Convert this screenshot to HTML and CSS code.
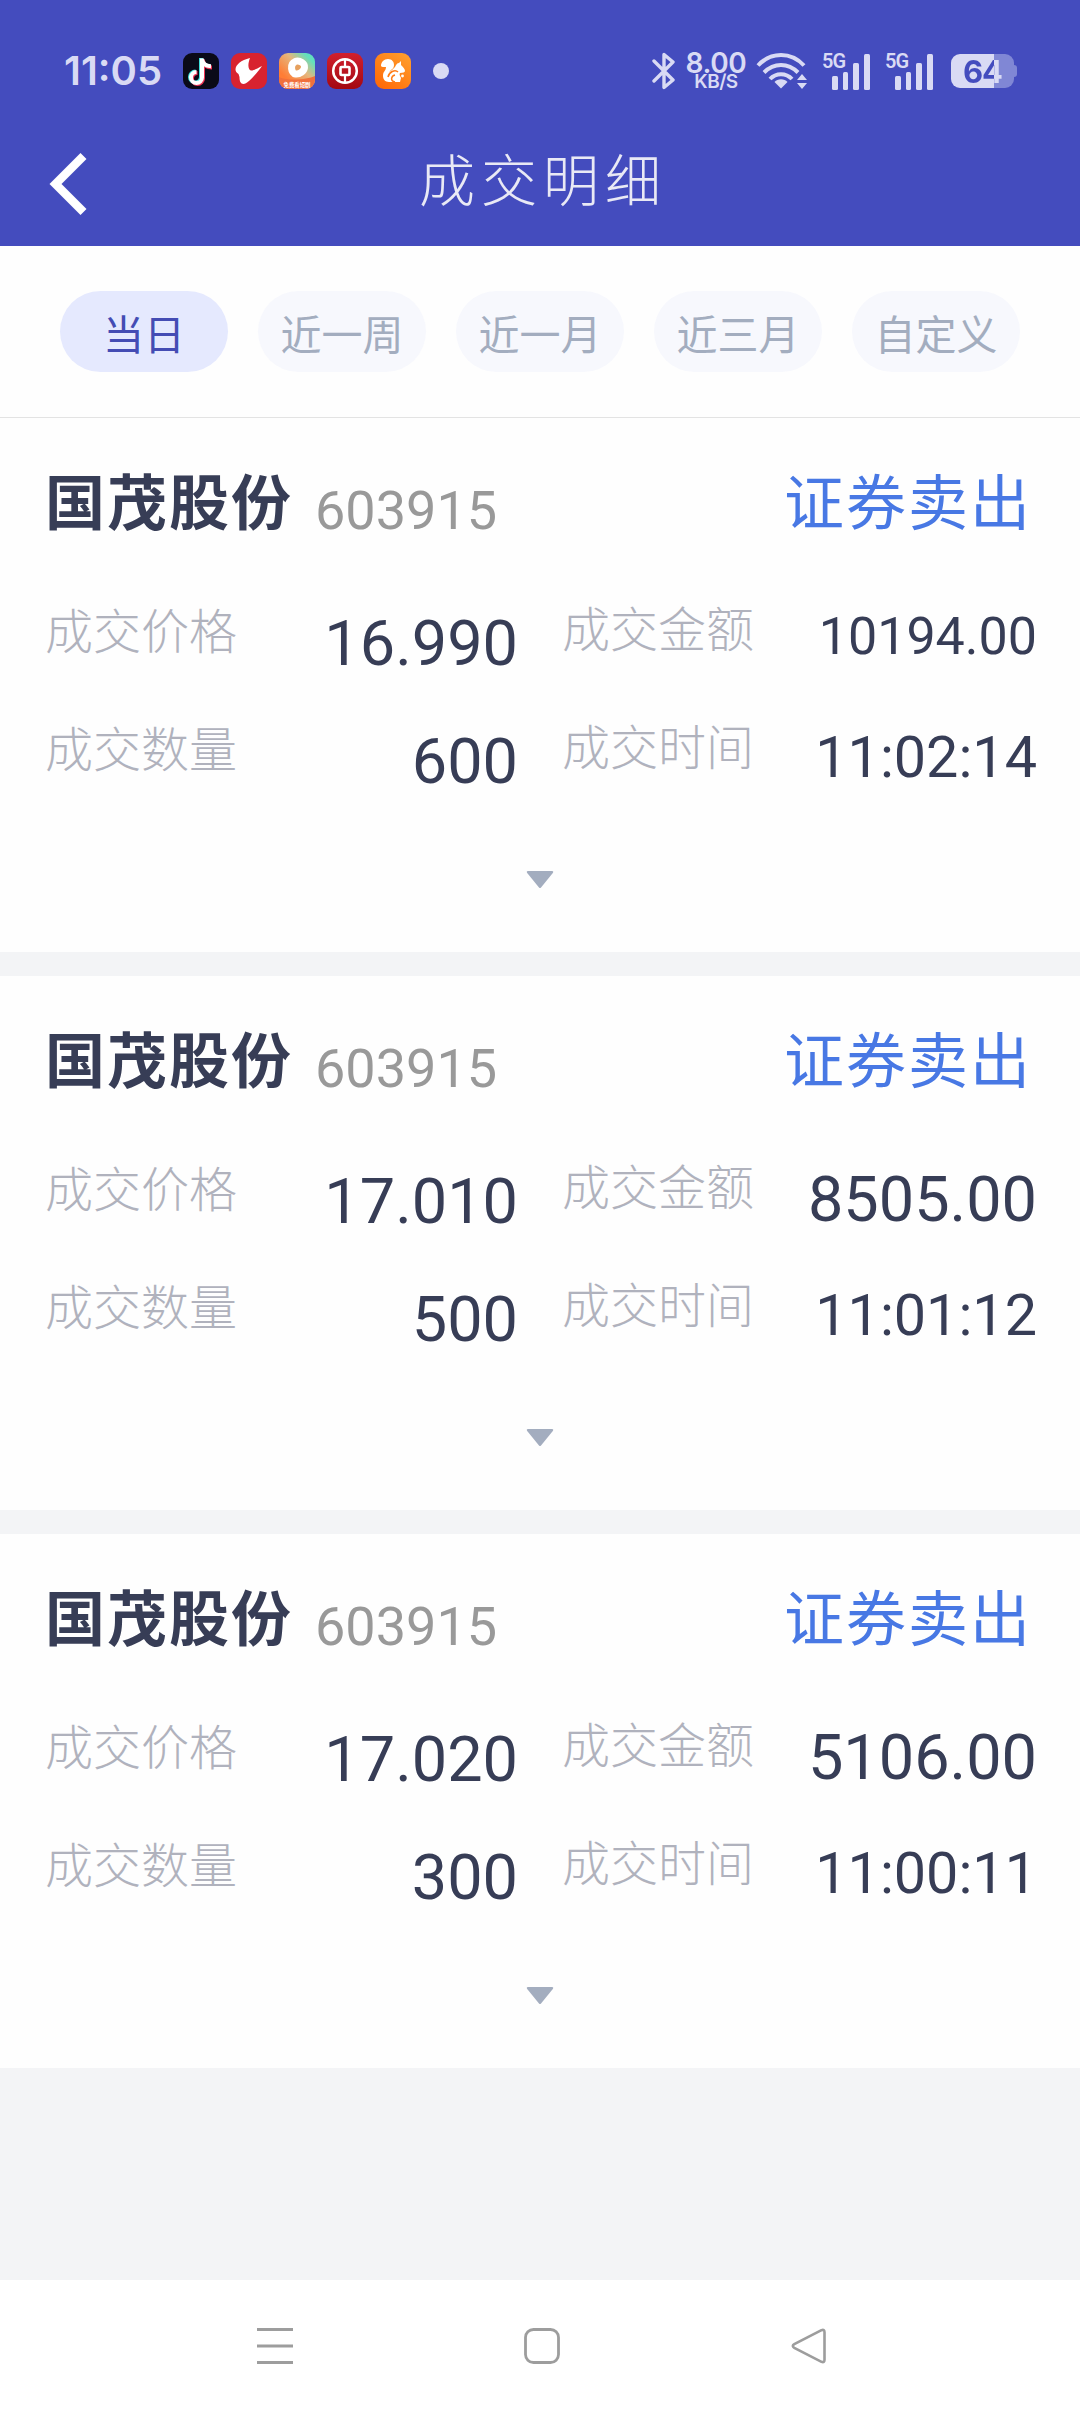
FILE: index.html
```html
<!DOCTYPE html>
<html lang="zh-CN">
<head>
<meta charset="utf-8">
<title>成交明细</title>
<link rel="stylesheet" href="styles.css">
</head>
<body>
<div class="screen">
  <header class="top">
    <div class="status">
      <span class="clock">11:05</span>
      <div class="apps">
        <svg width="36" height="36" viewBox="0 0 36 36"><rect width="36" height="36" rx="9" fill="#0a0a18"/><g fill="none" stroke-width="4"><path d="M18 5v19a5.500 5.500 0 1 1-5.500-5.500M18 7c1 4 4 6 8.500 6.500" stroke="#3fe0dc"/><path d="M20 6.500v19a5.500 5.500 0 1 1-5.500-5.500M20 8c1 4 4 6.500 9 6.500" stroke="#ee3355"/><path d="M19 5.500v19a5.500 5.500 0 1 1-5.500-5.500M19 6c.5 4.500 4 7 9 7.200" stroke="#fff"/></g></svg>
        <svg width="36" height="36" viewBox="0 0 36 36"><rect width="36" height="36" rx="9" fill="#d8232f"/><path d="M19 5C10 7 4.500 12 4.500 16.500c0 2 1 3 3 4.500l1 3c0 4 1 7 4 7 4 0 12-9 18.500-18-6 3-9 5-11 4.500-3-1-3.500-6-1-12.500Z" fill="#fff"/></svg>
        <svg width="36" height="36" viewBox="0 0 36 36"><defs><linearGradient id="video" x1="0" y1="1" x2="1" y2="0"><stop offset=".25" stop-color="#ff7d35"/><stop offset=".6" stop-color="#e5b67d"/><stop offset=".85" stop-color="#62dfbd"/></linearGradient></defs><rect width="36" height="36" rx="9" fill="url(#video)"/><path d="M0 24c8 4 28 3 36-1v4a9 9 0 0 1-9 9H9a9 9 0 0 1-9-9Z" fill="#f0703c"/><path d="M16 8.500c5-1.500 10 2 9.500 6s-5 7-9 6.500-6.500-10 .0-12.500Z" fill="#e6a05e" stroke="#fff" stroke-width="7" stroke-linejoin="round"/><text x="18" y="33.500" class="app-caption">免费看短剧</text></svg>
        <svg width="36" height="36" viewBox="0 0 36 36"><defs><linearGradient id="bank" x2="0" y2="1"><stop stop-color="#d1202e"/><stop offset="1" stop-color="#a30812"/></linearGradient></defs><rect width="36" height="36" rx="9" fill="url(#bank)"/><g fill="none" stroke="#fff"><circle cx="18" cy="18" r="11.800" stroke-width="2.500"/><rect x="13.500" y="14" width="9" height="8" rx="1" stroke-width="2.600"/><path d="M18 6v8M18 22v8" stroke-width="2.200"/></g></svg>
        <svg width="36" height="36" viewBox="0 0 36 36"><defs><linearGradient id="uc" x1="1" x2=".2" y2="1"><stop stop-color="#ffa12f"/><stop offset="1" stop-color="#ff6a08"/></linearGradient></defs><rect width="36" height="36" rx="9" fill="url(#uc)"/><path d="M6 13c0-4 3-7 7-7s6 3 6 6c0 2-1 4-3 5l-2 2c2-1 4-3 6-5 1-2 2-4 4-4l2-2v4c2 2 4 4 4 6 0 1-2 2-5 2-1 1 0 3 1 5l-1 4H14c-4 0-6-3-6-6 0-5 3-5 3-9-2 0-5 0-5-1Z" fill="#fff"/><path d="M13 24c1-5 7-8 10-5M20 29c-5-1-4-6 0-7" fill="none" stroke="#ff7b15" stroke-width="1.500"/><circle cx="27.500" cy="23" r="1.400" fill="#fff"/></svg>
      </div>
      <i class="dot"></i>
      <div class="indicators">
        <svg class="bluetooth" width="24" height="38" viewBox="0 0 24 38"><path d="M2 9 21 28 12 35.500V2.500L21 10 2 29" fill="none" stroke="#d9daf4" stroke-width="3.400" stroke-linejoin="round" stroke-linecap="round"/></svg>
        <div class="speed"><b>8.00</b><span>KB/S</span></div>
        <svg class="wifi" width="52" height="38" viewBox="0 0 52 38"><g fill="none" stroke="#d9daf4" stroke-width="4"><path d="M2 13.500C15-.5 35-.5 48 13.500"/><path d="M8 20.500c10-10 24-10 34 0"/><path d="M14 27c6-6.500 16-6.500 22 0"/></g><path d="M25 36.500 18.500 30c3-3.600 10-3.600 13 0Z" fill="#d9daf4"/><path d="m46 22 5 6H41ZM46 37l5-6H41Z" fill="#d9daf4"/></svg>
        <div class="signal"><b>5G</b><i class="bar b1"></i><i class="bar b2"></i><i class="bar b3"></i><i class="bar b4"></i></div>
        <div class="signal"><b>5G</b><i class="bar b1"></i><i class="bar b2"></i><i class="bar b3"></i><i class="bar b4"></i></div>
        <div class="battery"><div class="cell"><span>64</span></div><i class="cap"></i></div>
      </div>
    </div>
    <div class="titlebar">
      <svg class="back" width="38" height="64" viewBox="0 0 38 64"><path d="M31.500 1 37.500 7 12.500 32l25 25-6 6L.5 32Z" fill="#fff"/></svg>
      <h1>成交明细</h1>
    </div>
  </header>
  <nav class="tabs">
    <button class="tab active">当日</button>
    <button class="tab">近一周</button>
    <button class="tab">近一月</button>
    <button class="tab">近三月</button>
    <button class="tab">自定义</button>
  </nav>
  <main class="list">
    <section class="card">
      <div class="head"><h2>国茂股份</h2><span class="code">603915</span><span class="side">证券卖出</span></div>
      <div class="details">
        <div class="item"><span class="label">成交价格</span><span class="value">16.990</span></div>
        <div class="item right"><span class="label">成交金额</span><span class="value small">10194.00</span></div>
        <div class="item"><span class="label">成交数量</span><span class="value">600</span></div>
        <div class="item right"><span class="label">成交时间</span><span class="value time">11:02:14</span></div>
      </div>
      <svg class="more" width="28" height="18" viewBox="0 0 28 18"><path d="M2 0h24q2 0 .8 2L15 16.500q-1 1-2 0L1.200 2Q0 0 2 0Z" fill="#a3adbf"/></svg>
    </section>
    <section class="card">
      <div class="head"><h2>国茂股份</h2><span class="code">603915</span><span class="side">证券卖出</span></div>
      <div class="details">
        <div class="item"><span class="label">成交价格</span><span class="value">17.010</span></div>
        <div class="item right"><span class="label">成交金额</span><span class="value">8505.00</span></div>
        <div class="item"><span class="label">成交数量</span><span class="value">500</span></div>
        <div class="item right"><span class="label">成交时间</span><span class="value time">11:01:12</span></div>
      </div>
      <svg class="more" width="28" height="18" viewBox="0 0 28 18"><path d="M2 0h24q2 0 .8 2L15 16.500q-1 1-2 0L1.200 2Q0 0 2 0Z" fill="#a3adbf"/></svg>
    </section>
    <section class="card">
      <div class="head"><h2>国茂股份</h2><span class="code">603915</span><span class="side">证券卖出</span></div>
      <div class="details">
        <div class="item"><span class="label">成交价格</span><span class="value">17.020</span></div>
        <div class="item right"><span class="label">成交金额</span><span class="value">5106.00</span></div>
        <div class="item"><span class="label">成交数量</span><span class="value">300</span></div>
        <div class="item right"><span class="label">成交时间</span><span class="value time">11:00:11</span></div>
      </div>
      <svg class="more" width="28" height="18" viewBox="0 0 28 18"><path d="M2 0h24q2 0 .8 2L15 16.500q-1 1-2 0L1.200 2Q0 0 2 0Z" fill="#a3adbf"/></svg>
    </section>
  </main>
  <footer class="navbar">
    <svg width="36" height="36" viewBox="0 0 36 36"><path d="M0 1.600h36M0 18h36M0 34.400h36" stroke="#9d9d9d" stroke-width="3"/></svg>
    <svg width="36" height="36" viewBox="0 0 36 36"><rect x="1.500" y="1.500" width="33" height="33" rx="8" fill="none" stroke="#9d9d9d" stroke-width="2.800"/></svg>
    <svg width="36" height="36" viewBox="0 0 36 36"><path d="M30.500 2.200 3.300 16.200q-3 1.800 0 3.600l27.200 14q3 1.200 3-2V4.200q0-3.200-3-2Z" fill="none" stroke="#9d9d9d" stroke-width="2.600"/></svg>
  </footer>
</div>
</body>
</html>
```
FILE: styles.css
```css
* { box-sizing: border-box; }
body { margin: 0; font-family: Roboto, "Noto Sans CJK SC", sans-serif; }
svg { display: block; flex: none; }
h1, h2 { margin: 0; }

.screen { width: 1080px; height: 2412px; display: flex; flex-direction: column; background: #f3f4f6; overflow: hidden; }

.top { height: 246px; background: #444cbe; flex: none; }
.status { height: 122px; padding: 20px 63px 0 64px; display: flex; align-items: center; color: #d9daf4; font-family: Inter, sans-serif; }
.clock { width: 119px; font-size: 40px; font-weight: 600; line-height: 40px; letter-spacing: 0; white-space: nowrap; }
.apps { display: flex; gap: 12px; }
.app-caption { font: 700 5.400px "Noto Sans CJK SC", sans-serif; fill: #fff; text-anchor: middle; }
.dot { width: 16px; height: 16px; border-radius: 50%; background: #d9daf4; margin-left: 22px; }
.indicators { display: flex; align-items: center; margin-left: auto; height: 38px; }
.speed { width: 60px; margin-left: 10px; display: flex; flex-direction: column; align-items: center; }
.speed b { font-size: 28px; font-weight: 600; line-height: 22px; letter-spacing: -.4px; }
.speed span { font-size: 19px; font-weight: 600; line-height: 16px; letter-spacing: -.5px; }
.wifi { margin-left: 10px; }
.signal { width: 49px; height: 37px; margin-left: 14px; display: flex; align-items: flex-end; gap: 5px; }
.signal b { width: 5px; font: 600 20px/20px "Liberation Sans", sans-serif; font-family: Roboto, sans-serif; letter-spacing: -1px; align-self: flex-start; margin-top: -2px; margin-right: 0; }
.bar { width: 5.700px; border-radius: 1.500px; background: #d9daf4; flex: none; }
.b1 { height: 14px; }
.b2 { height: 18px; }
.b3 { height: 27px; }
.b4 { height: 36px; }
.battery { margin-left: 17px; display: flex; align-items: center; }
.cell { width: 63px; height: 34px; border-radius: 9px; background: linear-gradient(90deg, #d9daf4 43px, #8087d5 43px); text-align: center; }
.cell span { display: block; font-size: 31px; font-weight: 700; line-height: 35px; letter-spacing: -1px; padding-left: 0; color: transparent; background: linear-gradient(90deg, #444cbe 43px, #d9daf4 43px); background-clip: text; -webkit-background-clip: text; }
.cap { width: 3px; height: 12px; background: #8087d5; border-radius: 0 3px 3px 0; }

.titlebar { height: 124px; display: grid; grid-template-columns: 100px 1fr 100px; align-items: center; }
.back { margin: -1px 0 0 49px; }
h1 { color: #e9e9f5; font-size: 56px; font-weight: 300; letter-spacing: 6px; text-align: center; line-height: 70px; padding: 0 0 4px 6px; }

.tabs { height: 172px; flex: none; background: #fefefe; border-bottom: 1px solid #e3e3e3; display: flex; gap: 30px; padding: 45px 60px 0; }
.tab { width: 168px; height: 81px; border: 0; border-radius: 40.500px; background: #f7f8fd; color: #a3adbf; font: 400 41px/80px "Noto Sans CJK SC", sans-serif; padding: 0; text-align: center; white-space: nowrap; }
.tab.active { background: #e5e9fe; color: #444cb4; }

.list { display: flex; flex-direction: column; gap: 24px; }
.card { height: 534px; background: #fefefe; padding: 47px 43px 0 45px; }
.head { height: 80px; display: flex; line-height: 80px; white-space: nowrap; }
h2 { font-size: 60px; font-weight: 700; letter-spacing: 2px; color: #373d56; width: 270px; }
.code { font-size: 54px; color: #999; padding-top: 6px; }
.side { margin-left: auto; font-size: 60px; letter-spacing: 2px; color: #4878e4; font-weight: 400; margin-right: 5px; }
.details { margin-top: 27px; display: grid; grid-template-columns: 473px 475px; column-gap: 44px; grid-auto-rows: 118px; line-height: 118px; }
.item { display: flex; justify-content: space-between; white-space: nowrap; height: 118px; }
.label { font-size: 48px; color: #b0b2bd; font-weight: 300; margin-top: 2px; }
.right .label { margin-top: 0; }
.value { font-size: 63px; color: #373d56; margin-top: 13px; }
.right .value { margin-top: 11px; }
.right .value.small { font-size: 52px; margin-top: 6px; }
.right .value.time { font-size: 57.500px; margin-top: 9px; }
.more { margin: 63px auto 0 481px; }

.navbar { margin-top: auto; height: 132px; background: #fff; display: flex; justify-content: space-between; align-items: center; padding: 0 253px 0 257px; }
```
